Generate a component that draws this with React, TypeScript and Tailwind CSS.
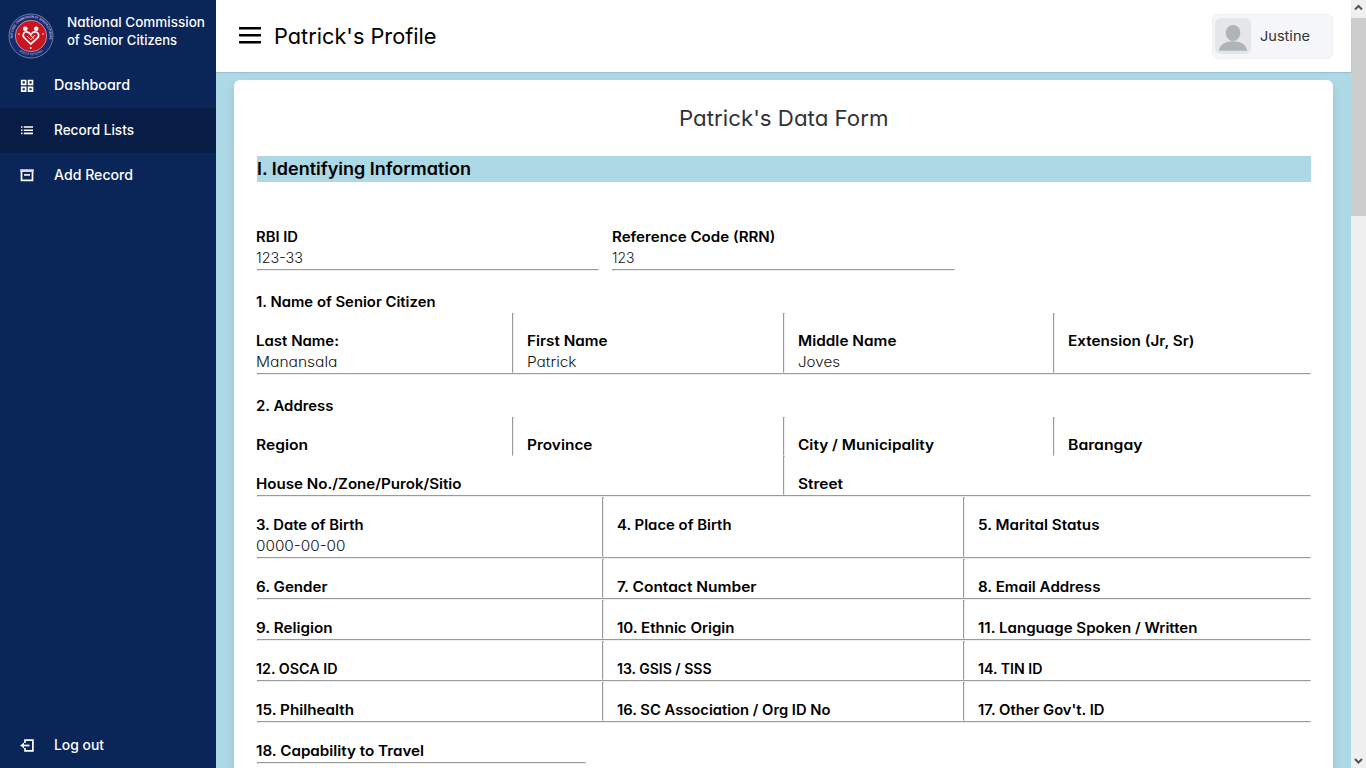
import React, { useLayoutEffect, useRef } from "react";

/* Text set to a fixed advance width by widening its letters. */
function Fit({ w, className = "", children }: { w: number; className?: string; children: string }) {
  const box = useRef<HTMLSpanElement>(null);
  const ref = useRef<HTMLSpanElement>(null);
  useLayoutEffect(() => {
    const el = ref.current;
    if (!el || !box.current) return;
    el.style.transform = "none";
    const natural = el.getBoundingClientRect().width;
    box.current.style.width = `${w}px`;
    el.style.transform = `scaleX(${w / natural})`;
  }, [w, children]);
  return (
    <span ref={box} className={`inline-block whitespace-pre ${className}`}>
      <span ref={ref} className="inline-block origin-left">
        {children}
      </span>
    </span>
  );
}

type Item = { label: string; w: number; value?: string; vw?: number };

function Field({ label, w, value, vw }: Item) {
  return (
    <div className="text-sm leading-[19px]">
      <div className="h-[21px] font-semibold text-black">
        <Fit w={w}>{label}</Fit>
      </div>
      {value && (
        <div className="h-[21px] font-light text-[#111]">
          <Fit w={vw ?? 0}>{value}</Fit>
        </div>
      )}
    </div>
  );
}

function Rule({ className = "" }: { className?: string }) {
  return <div className={`h-0.5 border border-t-[#9a9a9a] border-l-[#9a9a9a] border-r-[#eeeeee] border-b-[#eeeeee] ${className}`} />;
}

function Row({ items, cols, rule = true }: { items: Item[]; cols: string; rule?: boolean }) {
  return (
    <>
      <div className={`grid ${cols}`}>
        {items.map((it, i) => (
          <div key={it.label} className="flex">
            {i > 0 && (
              <div className="mr-3.5 w-0.5 shrink-0 border border-t-[#9a9a9a] border-l-[#9a9a9a] border-r-[#eeeeee] border-b-[#eeeeee]" />
            )}
            <div className="-ml-px pt-[18px]">
              <Field {...it} />
            </div>
          </div>
        ))}
      </div>
      {rule && <Rule />}
    </>
  );
}

const four = "grid-cols-[255px_271px_270px_258px]";
const three = "grid-cols-[345px_361px_348px]";
const two = "grid-cols-[526px_528px]";

const nameRow: Item[] = [
  { label: "Last Name:", w: 83, value: "Manansala", vw: 81.5 },
  { label: "First Name", w: 80.5, value: "Patrick", vw: 49.5 },
  { label: "Middle Name", w: 98.5, value: "Joves", vw: 42 },
  { label: "Extension (Jr, Sr)", w: 126.5 },
];
const addressRow: Item[] = [
  { label: "Region", w: 52 },
  { label: "Province", w: 65.5 },
  { label: "City / Municipality", w: 136 },
  { label: "Barangay", w: 74.5 },
];
const streetRow: Item[] = [
  { label: "House No./Zone/Purok/Sitio", w: 205.5 },
  { label: "Street", w: 45 },
];
const detailRows: Item[][] = [
  [
    { label: "3. Date of Birth", w: 107.5, value: "0000-00-00", vw: 89.5 },
    { label: "4. Place of Birth", w: 114.5 },
    { label: "5. Marital Status", w: 121.5 },
  ],
  [
    { label: "6. Gender", w: 71.5 },
    { label: "7. Contact Number", w: 139.5 },
    { label: "8. Email Address", w: 122.5 },
  ],
  [
    { label: "9. Religion", w: 76.5 },
    { label: "10. Ethnic Origin", w: 117.5 },
    { label: "11. Language Spoken / Written", w: 219.5 },
  ],
  [
    { label: "12. OSCA ID", w: 81.5 },
    { label: "13. GSIS / SSS", w: 94.5 },
    { label: "14. TIN ID", w: 64.5 },
  ],
  [
    { label: "15. Philhealth", w: 98 },
    { label: "16. SC Association / Org ID No", w: 213.5 },
    { label: "17. Other Gov't. ID", w: 126.5 },
  ],
];

function Logo() {
  return (
    <svg viewBox="0 0 46 46" className="size-[46px] shrink-0">
      <defs>
        <path id="sealTop" d="M5 27 A18.4 18.4 0 1 1 41 27" />
        <path id="sealBottom" d="M9 36.5 A20 20 0 0 0 37 36.5" />
      </defs>
      <circle cx="23" cy="23" r="22" fill="#17296f" stroke="#8292b5" strokeWidth="0.8" />
      <circle cx="23" cy="23" r="15.7" fill="#c9151e" stroke="#b9aec8" strokeWidth="0.8" />
      <text fill="#c5cce0" fontSize="3.2" fontFamily="Inter, sans-serif" fontWeight="600">
        <textPath href="#sealTop" startOffset="2" textLength="62" lengthAdjust="spacingAndGlyphs">NATIONAL COMMISSION OF SENIOR CITIZENS</textPath>
      </text>
      <text fill="#c5cce0" fontSize="3" fontFamily="Inter, sans-serif">
        <textPath href="#sealBottom" startOffset="3" textLength="25" lengthAdjust="spacingAndGlyphs">REPUBLIC OF THE PHILIPPINES</textPath>
      </text>
      <g fill="#fff">
        <circle cx="17.3" cy="15.7" r="2.3" />
        <circle cx="28.2" cy="15.7" r="2.3" />
        <circle cx="11" cy="21" r="0.8" />
        <circle cx="35" cy="21" r="0.8" />
        <circle cx="22.7" cy="35" r="1" />
      </g>
      <path d="M22.8 31 L16 24.5 C13.8 21.5 16.2 18.3 19 18.8 C21 19 22 20.5 22.8 21.7 C24 19.6 26 18.3 28.2 19 C31 20 31.3 23 29.6 25 Z" fill="none" stroke="#fff" strokeWidth="1.7" />
      <path d="M19 23 L23 27 M22 22 L26 25.5 M27 22 L22.5 27" stroke="#ffe2e2" strokeWidth="1" fill="none" />
    </svg>
  );
}

function Avatar() {
  return (
    <svg viewBox="0 0 36 36" className="size-9 shrink-0 rounded-md bg-[#e4e6e7]">
      <ellipse cx="18" cy="15" rx="7.3" ry="8" fill="#aeb4b7" />
      <path d="M3.8 32.8 C5 26 11 23.2 18 23.2 C25 23.2 31 26 32.2 32.8 Z" fill="#aeb4b7" />
    </svg>
  );
}

function NavIcon({ children }: { children: React.ReactNode }) {
  return (
    <svg viewBox="0 0 16 16" className="mr-[19px] size-4 shrink-0" fill="none" stroke="#fff">
      {children}
    </svg>
  );
}

const GridIcon = () => (
  <NavIcon>
    <path strokeWidth="1.7" d="M2.75 2.5h3.9v3.9h-3.9zM9.6 2.5h3.9v3.9h-3.9zM2.75 9.3h3.9v3.9h-3.9zM9.6 9.3h3.9v3.9h-3.9z" />
  </NavIcon>
);
const ListIcon = () => (
  <NavIcon>
    <path strokeWidth="1.6" d="M2 4h1.5M4.8 4H14M2 7.2h1.5M4.8 7.2H14M2 10.4h1.5M4.8 10.4H14" />
  </NavIcon>
);
const ArchiveIcon = () => (
  <NavIcon>
    <path d="M1.2 1.2h13.6v2.8H1.2z" fill="#d6d6ee" stroke="none" />
    <path strokeWidth="1.7" d="M2.5 3.7v8.7h11V3.7" />
    <path strokeWidth="1.6" d="M5 6.9h6" />
  </NavIcon>
);
const LogOutIcon = () => (
  <NavIcon>
    <path strokeWidth="1.7" d="M6 5V2.1h7.9v10.7H6V10" />
    <path strokeWidth="1.7" d="M4 7.5h6.5" />
    <path d="M1.2 7.5 5 4.4v6.2z" fill="#fff" stroke="none" />
  </NavIcon>
);

const nav = [
  { label: "Dashboard", w: 76, Icon: GridIcon },
  { label: "Record Lists", w: 80, Icon: ListIcon, active: true },
  { label: "Add Record", w: 79, Icon: ArchiveIcon },
];

export default function App() {
  return (
    <div className="flex h-screen w-screen overflow-hidden bg-[#add8e6] font-[Inter,'Noto_Sans',sans-serif] [font-feature-settings:'cv11']">
      <aside className="flex w-[216px] shrink-0 flex-col bg-[#0a2558] text-white">
        <div className="flex h-[63px] shrink-0 pl-2">
          <div className="pt-[13px]"><Logo /></div>
          <div className="ml-[13px] pt-[13px] text-[13px] leading-[18px] font-medium">
            <div><Fit w={138}>National Commission</Fit></div>
            <div><Fit w={110}>of Senior Citizens</Fit></div>
          </div>
        </div>
        {nav.map(({ label, w, Icon, active }) => (
          <div key={label} className={`flex h-[45px] shrink-0 items-center pl-[19px] text-sm font-[450] ${active ? "bg-[#081d45]" : ""}`}>
            <Icon />
            <Fit w={w} className="-translate-y-px">{label}</Fit>
          </div>
        ))}
        <div className="mt-auto flex h-[45px] items-center pl-[19px] text-sm font-[450]">
          <LogOutIcon />
          <Fit w={50} className="-translate-y-px">Log out</Fit>
        </div>
      </aside>

      <div className="flex min-w-0 flex-1 flex-col">
        <header className="z-10 flex h-[72px] shrink-0 items-center justify-between bg-white pr-[18px] pl-[18px] shadow-[0_1px_1px_rgba(0,0,0,0.1)]">
          <div className="flex items-center text-black">
            <svg viewBox="0 0 32 32" className="mr-2 size-8 -translate-y-px" fill="currentColor">
              <path d="M5 8h22v2.5H5zM5 15h22v2.5H5zM5 22h22v2.5H5z" />
            </svg>
            <Fit w={162.5} className="text-[22px] leading-8">Patrick's Profile</Fit>
          </div>
          <div className="flex h-[45px] w-[121px] items-center rounded-md border border-[#efeef1] bg-[#f5f6fa] pl-0.5">
            <Avatar />
            <Fit w={50} className="ml-[9px] text-[13.5px] text-[#333]">Justine</Fit>
          </div>
        </header>

        <main className="min-h-0 flex-1 overflow-hidden px-[18px] pt-2">
          <section className="h-[800px] rounded-md bg-white pr-[22px] pl-[23px] shadow-[0_5px_10px_rgba(0,0,0,0.1)]">
            <h1 className="flex h-[76px] justify-center pt-[22px] text-[22px] leading-8 text-[#333]">
              <Fit w={209.5}>Patrick's Data Form</Fit>
            </h1>
            <h2 className="h-[26px] bg-[#add8e6] text-[17px] leading-[26px] font-semibold text-black">
              <Fit w={214}>I. Identifying Information</Fit>
            </h2>
            <div className="grid grid-cols-[342px_343px] gap-x-[13px] pt-[45px]">
              <div>
                <div className="-ml-px"><Field label="RBI ID" w={42} value="123-33" vw={47} /></div>
                <Rule />
              </div>
              <div>
                <Field label="Reference Code (RRN)" w={163.5} value="123" vw={22.5} />
                <Rule />
              </div>
            </div>
            <div className="-ml-px pt-[21px]"><Field label="1. Name of Senior Citizen" w={179.5} /></div>
            <Row items={nameRow} cols={four} />
            <div className="-ml-px pt-[21px]"><Field label="2. Address" w={77.5} /></div>
            <Row items={addressRow} cols={four} rule={false} />
            <Row items={streetRow} cols={two} />
            {detailRows.map((r) => (
              <Row key={r[0].label} items={r} cols={three} />
            ))}
            <div className="-ml-px pt-[18px]"><Field label="18. Capability to Travel" w={168} /></div>
            <Rule className="w-[329px]" />
          </section>
        </main>
      </div>

      <div className="flex w-[15px] shrink-0 flex-col items-center justify-between bg-[#f0f0f0]">
        <div className="flex w-full flex-col items-center">
          <svg viewBox="0 0 15 18" className="h-[18px] w-[15px]" fill="none" stroke="#555" strokeWidth="2">
            <path d="M4 9.5 L7.5 6 L11 9.5" />
          </svg>
          <div className="h-[198px] w-full bg-[#cdcdcd]" />
        </div>
        <svg viewBox="0 0 15 18" className="h-[18px] w-[15px]" fill="none" stroke="#555" strokeWidth="2">
          <path d="M4 9 L7.5 12.5 L11 9" />
        </svg>
      </div>
    </div>
  );
}
